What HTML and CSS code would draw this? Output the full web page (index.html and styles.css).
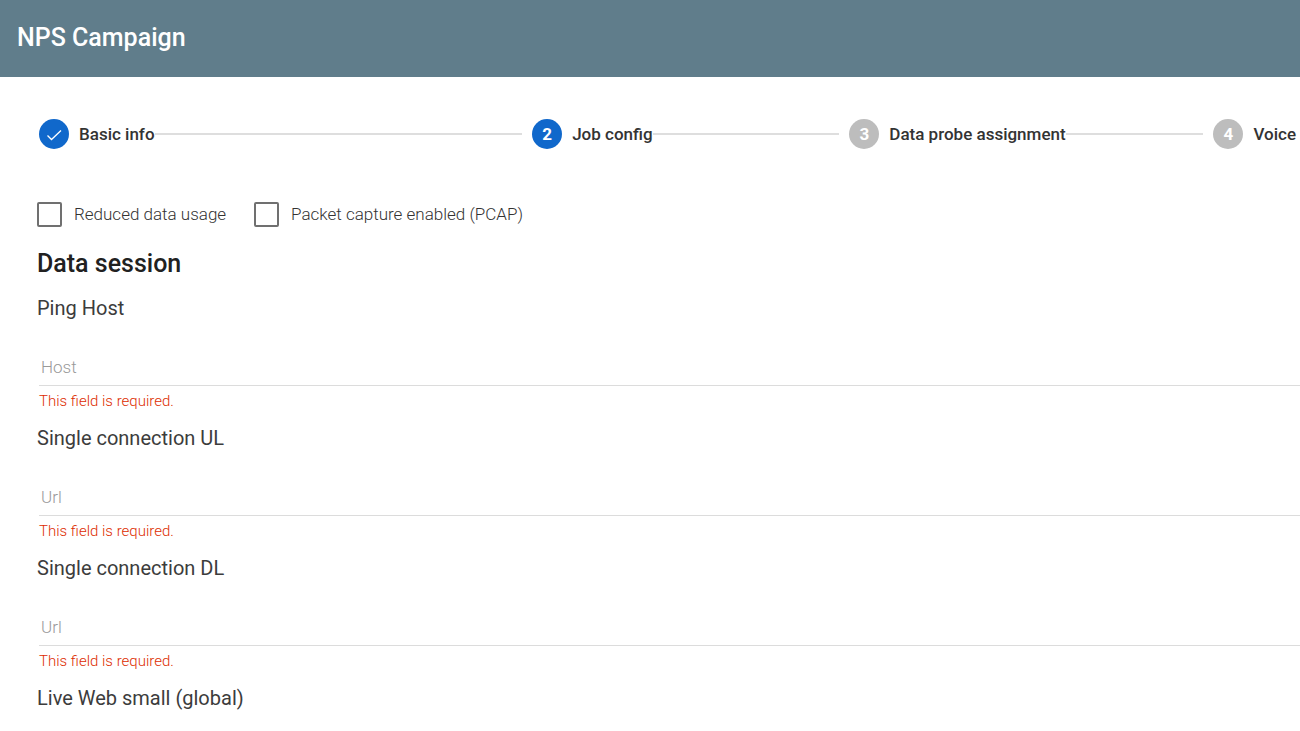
FILE: index.html
```html
<!doctype html>
<html lang="en">
  <head>
    <meta charset="utf-8">
    <meta name="viewport" content="width=device-width, initial-scale=1">
    <title>NPS Campaign</title>
    <link rel="stylesheet" href="styles.css">
  </head>
  <body>
    <header class="toolbar">
      <h1>NPS Campaign</h1>
    </header>
    <main>
      <ol class="stepper">
        <li class="step done">
          <span class="step-number">
            <svg width="16" height="16" viewBox="0 0 16 16" aria-hidden="true">
              <path d="M1.5 9.5 L5.5 13.5 L15 4.5" fill="none" stroke="#fff" stroke-width="1.3"/>
            </svg>
          </span>
          <span class="step-label">Basic info</span>
        </li>
        <li class="step active" aria-current="step">
          <span class="step-number">2</span>
          <span class="step-label">Job config</span>
        </li>
        <li class="step">
          <span class="step-number">3</span>
          <span class="step-label">Data probe assignment</span>
        </li>
        <li class="step">
          <span class="step-number">4</span>
          <span class="step-label">Voice</span>
        </li>
      </ol>
      <form class="job-config" novalidate>
        <div class="options">
          <label><input type="checkbox" name="reduced"> Reduced data usage</label>
          <label><input type="checkbox" name="pcap"> Packet capture enabled (PCAP)</label>
        </div>
        <h2>Data session</h2>
        <section class="field">
          <h3><label for="ping-host">Ping Host</label></h3>
          <input type="text" id="ping-host" name="ping-host" placeholder="Host" aria-describedby="ping-host-error" required>
          <p class="error" id="ping-host-error">This field is required.</p>
        </section>
        <section class="field">
          <h3><label for="single-ul">Single connection UL</label></h3>
          <input type="url" id="single-ul" name="single-ul" placeholder="Url" aria-describedby="single-ul-error" required>
          <p class="error" id="single-ul-error">This field is required.</p>
        </section>
        <section class="field">
          <h3><label for="single-dl">Single connection DL</label></h3>
          <input type="url" id="single-dl" name="single-dl" placeholder="Url" aria-describedby="single-dl-error" required>
          <p class="error" id="single-dl-error">This field is required.</p>
        </section>
        <section class="field">
          <h3>Live Web small (global)</h3>
        </section>
      </form>
    </main>
  </body>
</html>
```
FILE: styles.css
```css
* {
  box-sizing: border-box;
}

body {
  margin: 0;
  font-family: Roboto, sans-serif;
  color: #212121;
  background: #fff;
}

h1, h2, h3, p {
  margin: 0;
}

.toolbar {
  padding: 22px 17px 23px;
  background: #607d8b;
}

.toolbar h1 {
  font-size: 25px;
  line-height: 32px;
  font-weight: 500;
  color: #fff;
}

/* Steps */
.stepper {
  display: grid;
  grid-template-columns: 493fr 317fr 364fr auto;
  margin: 0;
  padding: 42px 4px 0 39px;
  list-style: none;
}

.step {
  display: flex;
  align-items: center;
  white-space: nowrap;
}

.step:not(:last-child)::after {
  content: "";
  flex: 1;
  height: 2px;
  margin-right: 10px;
  background: #dedede;
}

.step-number {
  display: flex;
  align-items: center;
  justify-content: center;
  width: 30px;
  height: 30px;
  margin-right: 10px;
  border-radius: 50%;
  background: #bdbdbd;
  color: #fff;
  font-size: 17px;
  font-weight: 700;
}

.done .step-number,
.active .step-number {
  background: #1068cb;
}

.step-label {
  font-size: 17px;
  font-weight: 500;
  color: #333;
}

/* Form */
.job-config {
  padding: 49px 0 20px 37px;
}

.options {
  display: flex;
  gap: 28px;
}

.options label {
  display: flex;
  align-items: center;
  gap: 12px;
  font-size: 17px;
  font-weight: 300;
  line-height: 32px;
  color: #333;
}

.options input {
  appearance: none;
  width: 25px;
  height: 25px;
  margin: 0;
  border: 2px solid #707070;
  border-radius: 2px;
}

.options input:checked {
  border-color: #1068cb;
  background: #1068cb;
}

h2 {
  margin: 18px 0 16px;
  font-size: 25px;
  line-height: 32px;
  font-weight: 500;
}

.field h3 {
  font-size: 20px;
  line-height: 24px;
  font-weight: 400;
  color: #3c3c3c;
}

.field input {
  display: block;
  width: calc(100% - 2px);
  height: 37px;
  margin: 29px 0 0 2px;
  padding: 0 2px;
  border: 0;
  border-bottom: 1px solid #dcdcdc;
  outline: 0;
  font-family: inherit;
  font-size: 17px;
  font-weight: 300;
  color: #333;
}

.field input::placeholder {
  color: #999;
}

.field input:focus {
  border-color: #1068cb;
}

.error {
  padding: 5px 2px 15px;
  font-size: 15px;
  line-height: 20px;
  font-weight: 300;
  color: #dd2c00;
}
```
